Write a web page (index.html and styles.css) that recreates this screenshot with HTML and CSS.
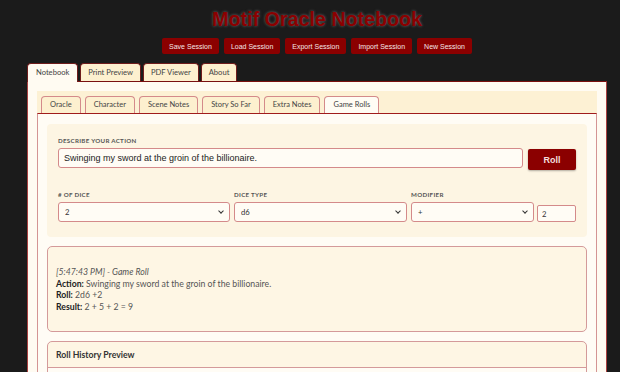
FILE: index.html
```html
<!DOCTYPE html>
<html>
<head>
<meta charset="utf-8">
<title>Motif Oracle Notebook</title>
<link rel="stylesheet" href="styles.css">
</head>
<body>
<div class="wrap">
<header class="top">
  <h1 class="title">Motif Oracle Notebook</h1>
  <div class="actions">
    <button class="act">Save Session</button>
    <button class="act">Load Session</button>
    <button class="act">Export Session</button>
    <button class="act">Import Session</button>
    <button class="act">New Session</button>
  </div>
</header>
<main class="app">
  <nav class="tabs">
    <span class="tab active">Notebook</span>
    <span class="tab">Print Preview</span>
    <span class="tab">PDF Viewer</span>
    <span class="tab">About</span>
  </nav>
  <section class="panel">
    <nav class="subtabs">
      <span class="subtab">Oracle</span>
      <span class="subtab">Character</span>
      <span class="subtab">Scene Notes</span>
      <span class="subtab">Story So Far</span>
      <span class="subtab">Extra Notes</span>
      <span class="subtab active">Game Rolls</span>
    </nav>
    <div class="pane">
      <div class="form-card">
        <div class="row1">
          <div class="field grow">
            <label class="lbl">Describe your action</label>
            <input class="text-in" type="text" value="Swinging my sword at the groin of the billionaire.">
          </div>
          <button class="roll">Roll</button>
        </div>
        <div class="row2">
          <div class="field">
            <label class="lbl"># of Dice</label>
            <span class="sel-wrap"><select class="sel"><option>2</option></select></span>
          </div>
          <div class="field">
            <label class="lbl">Dice Type</label>
            <span class="sel-wrap"><select class="sel"><option>d6</option></select></span>
          </div>
          <div class="field">
            <label class="lbl">Modifier</label>
            <div class="mod">
              <span class="sel-wrap"><select class="sel"><option>+</option></select></span>
              <input class="num" type="text" value="2">
            </div>
          </div>
        </div>
      </div>
      <div class="result">
        <div class="stamp">[5:47:43 PM] - Game Roll</div>
        <div><b>Action:</b> Swinging my sword at the groin of the billionaire.</div>
        <div><b>Roll:</b> 2d6 +2</div>
        <div><b>Result:</b> 2 + 5 + 2 = 9</div>
      </div>
      <div class="history">
        <div class="history-head">Roll History Preview</div>
        <div class="history-body"></div>
      </div>
    </div>
  </section>
</main>
</div>
</body>
</html>
```

FILE: styles.css
```css
* { box-sizing: border-box; }
html, body { margin: 0; }
body {
  background: #1b1b1b;
  font-family: Lato, "Noto Sans", sans-serif;
  color: #333;
  height: 372px;
  overflow: hidden;
}
.wrap { margin-left: 27px; width: 580px; }
.top { padding-top: 7px; text-align: center; }
.title {
  margin: 0;
  font: bold 19.7px/24px "Liberation Sans", Arial, sans-serif;
  color: #8b0000;
  text-shadow: 0 0 3px rgba(200,200,200,0.5);
}
.actions {
  display: flex;
  justify-content: center;
  gap: 5px;
  margin-top: 7px;
}
.act {
  height: 16px;
  padding: 0 7px;
  background: #8b0000;
  color: #f3e6e6;
  border: none;
  border-radius: 2px;
  font: 7px "Liberation Sans", Arial, sans-serif;
}
.app { margin-top: 9px; }
.tabs { display: flex; gap: 2px; }
.tab {
  height: 18px;
  padding: 0 7px;
  border: 1px solid #6e1c1c;
  border-bottom: none;
  border-radius: 4px 4px 0 0;
  background: #fdf0cf;
  font-size: 7.6px;
  line-height: 17px;
  color: #444;
}
.tab.active {
  background: #fffbf2;
  height: 19px;
  margin-bottom: -1px;
  padding: 0 8px;
  position: relative;
  z-index: 1;
}
.panel {
  border: 1px solid #a84040;
  border-top-color: #7a1010;
  background: #fffbf2;
  padding: 9px;
  height: 320px;
}
.subtabs {
  display: flex;
  gap: 4px;
  background: #fdf1d4;
  padding: 5px 4px 0;
  height: 22px;
}
.subtab {
  height: 17px;
  padding: 0 8px;
  border: 1px solid #d48a8a;
  border-bottom: none;
  border-radius: 4px 4px 0 0;
  background: #fdf0cf;
  font-size: 7.5px;
  line-height: 16px;
  color: #444;
}
.subtab.active { background: #fffcf4; }
.pane {
  border: 1px solid #d49494;
  border-top-color: #a01c1c;
  border-bottom: none;
  background: #fffcf5;
  padding: 10px 9px;
  height: 300px;
}
.form-card {
  background: #fdf5e3;
  border-radius: 4px;
  padding: 13px 11px 15px;
}
.row1 { display: flex; align-items: flex-end; gap: 5px; }
.field { display: flex; flex-direction: column; min-width: 0; }
.grow { flex: 1; }
.lbl {
  font-size: 6.2px;
  font-weight: 700;
  text-transform: uppercase;
  letter-spacing: 0.3px;
  color: #555;
  margin-bottom: 4px;
}
.text-in {
  height: 20px;
  border: 1px solid #d48a8a;
  border-radius: 3px;
  padding: 0 5px;
  background: #fffcf5;
  font: 9px "Liberation Sans", Arial, sans-serif;
  color: #222;
}
.roll {
  width: 48px;
  height: 21px;
  margin-bottom: -2px;
  background: #8b0000;
  color: #f3dede;
  border: none;
  border-radius: 2px;
  font: bold 9px "Liberation Sans", Arial, sans-serif;
  box-shadow: 0 1px 2px rgba(0,0,0,0.3);
}
.row2 {
  display: grid;
  grid-template-columns: 172px 173px 1fr;
  gap: 4px;
  margin-top: 23px;
}
.sel-wrap { position: relative; display: flex; min-width: 0; }
.sel-wrap::after {
  content: "";
  position: absolute;
  right: 7px;
  top: 7px;
  width: 3px;
  height: 3px;
  border-right: 1.2px solid #333;
  border-bottom: 1.2px solid #333;
  transform: rotate(45deg);
  pointer-events: none;
}
.sel {
  appearance: none;
  -webkit-appearance: none;
  flex: 1;
  min-width: 0;
  height: 20px;
  border: 1px solid #d48a8a;
  border-radius: 3px;
  background: #fffcf5;
  font: 7.7px Lato, "Noto Sans", sans-serif;
  color: #333;
  padding: 0 6px;
}
.mod { display: flex; align-items: flex-end; gap: 3px; }
.mod .sel-wrap { flex: 1; }
.num {
  width: 39px;
  height: 17px;
  border: 1px solid #d48a8a;
  border-radius: 2px;
  background: #fffcf5;
  font: 7.7px Lato, "Noto Sans", sans-serif;
  color: #333;
  padding: 0 4px;
}
.result {
  margin-top: 9px;
  border: 1px solid #d49a9a;
  border-radius: 5px;
  background: #fef6e4;
  padding: 19px 8px 19px;
  font-size: 8.7px;
  line-height: 11.5px;
  color: #555;
}
.result b { color: #222; }
.stamp { font-style: italic; }
.history {
  margin-top: 9px;
  border: 1px solid #d49a9a;
  border-radius: 5px;
  background: #fef6e4;
}
.history-head {
  height: 26px;
  padding: 0 8px;
  line-height: 25px;
  font-size: 8.7px;
  font-weight: 700;
  color: #333;
  border-bottom: 1px solid #d49a9a;
}
.history-body { height: 40px; background: #fffcf5; }
```
